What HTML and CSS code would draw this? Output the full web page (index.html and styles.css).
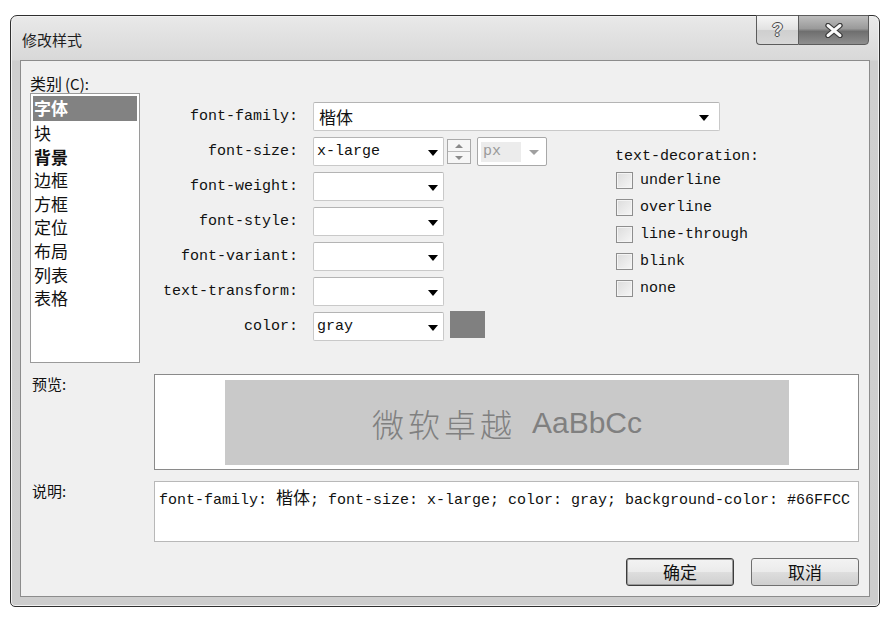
FILE: index.html
```html
<!DOCTYPE html>
<html lang="zh-CN">
<head>
    <meta charset="UTF-8">
    <title>修改样式</title>
    <link rel="stylesheet" href="styles.css">
</head>
<body>
    <div class="window">
        <div class="titlebar">
            <span class="title">修改样式</span>
            <div class="caption-btns">
                <span class="cap-btn help">?</span>
                <span class="cap-btn close">
                    <svg width="20" height="15" viewBox="0 0 20 15">
                        <path d="M4 2.5 L16 12.5 M16 2.5 L4 12.5" stroke="#3a3a3a" stroke-width="5.4" stroke-linecap="round"/>
                        <path d="M4 2.5 L16 12.5 M16 2.5 L4 12.5" stroke="#fafafa" stroke-width="3" stroke-linecap="round"/>
                    </svg>
                </span>
            </div>
        </div>

        <div class="panel">
            <div class="top">
                <div class="category">
                    <div class="cat-label">类别<span class="mnemonic">(C):</span></div>
                    <ul class="listbox">
                        <li class="selected">字体</li>
                        <li>块</li>
                        <li class="strong">背景</li>
                        <li>边框</li>
                        <li>方框</li>
                        <li>定位</li>
                        <li>布局</li>
                        <li>列表</li>
                        <li>表格</li>
                    </ul>
                </div>

                <div class="fields">
                    <label>font-family:</label>
                    <div class="combo wide"><span class="value cjk">楷体</span><span class="arrow"></span></div>

                    <div class="decoration">
                        <div class="deco-title">text-decoration:</div>
                        <div class="check"><span class="box"></span>underline</div>
                        <div class="check"><span class="box"></span>overline</div>
                        <div class="check"><span class="box"></span>line-through</div>
                        <div class="check"><span class="box"></span>blink</div>
                        <div class="check"><span class="box"></span>none</div>
                    </div>

                    <label>font-size:</label>
                    <div class="control-row">
                        <div class="combo"><span class="value">x-large</span><span class="arrow"></span></div>
                        <div class="spinner">
                            <span class="spin up"></span>
                            <span class="spin down"></span>
                        </div>
                        <div class="combo unit disabled"><span class="value">px</span><span class="arrow"></span></div>
                    </div>

                    <label>font-weight:</label>
                    <div class="combo"><span class="value"></span><span class="arrow"></span></div>

                    <label>font-style:</label>
                    <div class="combo"><span class="value"></span><span class="arrow"></span></div>

                    <label>font-variant:</label>
                    <div class="combo"><span class="value"></span><span class="arrow"></span></div>

                    <label>text-transform:</label>
                    <div class="combo"><span class="value"></span><span class="arrow"></span></div>

                    <label>color:</label>
                    <div class="control-row">
                        <div class="combo"><span class="value">gray</span><span class="arrow"></span></div>
                        <span class="swatch"></span>
                    </div>
                </div>
            </div>

            <div class="row preview-row">
                <div class="row-label">预览:</div>
                <div class="preview">
                    <div class="sample"><span class="sample-cjk">微软卓越</span> <span class="sample-latin">AaBbCc</span></div>
                </div>
            </div>

            <div class="row desc-row">
                <div class="row-label">说明:</div>
                <div class="desc">font-family: <span class="cjk">楷体</span>; font-size: x-large; color: gray; background-color: #66FFCC</div>
            </div>

            <div class="actions">
                <button type="button" class="btn default">确定</button>
                <button type="button" class="btn">取消</button>
            </div>
        </div>
    </div>
</body>
</html>
```

FILE: styles.css
```css
body { margin: 0; background: #fff; font-family: "Noto Sans CJK SC", sans-serif; color: #111; }

.window {
    box-sizing: border-box;
    width: 870px;
    height: 592px;
    margin: 15px 0 0 10px;
    padding: 0 9px 9px 9px;
    border: 1px solid #2f2f2f;
    border-radius: 7px 7px 5px 5px;
    background: linear-gradient(#e9e9e9, #d8d8d8 44px, #cfcfcf 45px, #cdcdcd);
    box-shadow: inset 0 0 0 1px #f2f2f2;
}

.titlebar { height: 44px; display: flex; align-items: flex-start; }
.title { font-size: 15px; line-height: 20px; padding: 14px 0 0 2px; color: #1e1e1e; }
.caption-btns { margin: -1px 1px 0 auto; display: flex; }
.cap-btn {
    box-sizing: border-box;
    height: 30px;
    display: flex;
    align-items: center;
    justify-content: center;
    border: 1px solid #5c5c5c;
}
.cap-btn.help {
    width: 42px;
    border-radius: 0 0 0 4px;
    border-right: none;
    background: linear-gradient(#f6f6f6, #e2e2e2 48%, #cfcfcf 52%, #d8d8d8);
    font-family: "Liberation Sans", sans-serif;
    font-weight: bold;
    font-size: 18px;
    color: #ececec;
    text-shadow: -1px 0 #4a4a4a, 1px 0 #4a4a4a, 0 -1px #4a4a4a, 0 1px #4a4a4a;
}
.cap-btn.close {
    width: 71px;
    border-radius: 0 0 4px 0;
    background: linear-gradient(#bdbdbd, #9a9a9a 45%, #6f6f6f 55%, #8e8e8e);
}

.panel {
    box-sizing: border-box;
    height: 537px;
    border: 1px solid #8c8c8c;
    background: #f0f0f0;
    padding: 13px 10px 0 9px;
}

.top { display: flex; height: 289px; }
.category { width: 110px; }
.cat-label { height: 19px; font-size: 16px; line-height: 18px; }
.mnemonic { font-size: 15px; margin-left: 3px; }
.listbox {
    box-sizing: border-box;
    height: 270px;
    margin: 0;
    padding: 2px;
    list-style: none;
    background: #fff;
    border: 1px solid #9a9a9a;
}
.listbox li { height: 23.6px; line-height: 23px; font-size: 17px; padding-left: 1px; }
.listbox li.selected { background: #828282; color: #fff; font-weight: bold; height: 25px; }
.listbox li.strong { font-weight: bold; }

.fields {
    flex: 1;
    margin-top: 28px;
    display: grid;
    grid-template-columns: 173px 303px 1fr;
    grid-auto-rows: 29px;
    row-gap: 6px;
    align-items: center;
    font-family: "Liberation Mono", monospace;
    font-size: 15px;
}
.fields label { text-align: right; padding-right: 15px; white-space: nowrap; }

.combo {
    box-sizing: border-box;
    width: 131px;
    height: 29px;
    display: flex;
    align-items: center;
    background: #fff;
    border: 1px solid #c9c9c9;
    border-top-color: #b4b4b4;
    border-radius: 2px;
    padding: 0 5px 0 3px;
}
.combo .value { flex: 1; white-space: nowrap; }
.combo .arrow {
    width: 0;
    height: 0;
    border-left: 5px solid transparent;
    border-right: 5px solid transparent;
    border-top: 6px solid #000;
    margin-top: 2px;
}
.combo.wide { grid-column: 2 / span 2; width: 407px; padding-right: 10px; }
.cjk { font-family: "Noto Sans CJK SC", sans-serif; font-size: 16px; }
.combo.wide .value { font-size: 17px; padding-left: 2px; }

.control-row { display: flex; align-items: center; gap: 6px; }
.spinner {
    box-sizing: border-box;
    width: 24px;
    height: 25px;
    margin-left: -3px;
    border: 1px solid #a9a9a9;
    display: flex;
    flex-direction: column;
    background: #f6f6f6;
}
.spin { flex: 1; display: flex; align-items: center; justify-content: center; }
.spin.up { border-bottom: 1px solid #b9b9b9; }
.spin.up::after { content: ""; border-left: 4px solid transparent; border-right: 4px solid transparent; border-bottom: 4px solid #8a8a8a; }
.spin.down::after { content: ""; border-left: 4px solid transparent; border-right: 4px solid transparent; border-top: 4px solid #8a8a8a; }
.combo.unit { width: 70px; border-color: #a8a8a8; padding-right: 9px; }
.combo.disabled .value { color: #9a9a9a; }
.combo.unit .value { flex: 0 0 38px; background: #ececec; height: 20px; line-height: 20px; margin-right: 8px; padding-left: 2px; }
.combo.disabled .arrow { border-top-color: #a0a0a0; border-left-width: 5px; border-right-width: 5px; border-top-width: 5px; }
.swatch { width: 35px; height: 27px; background: #808080; margin-top: -4px; }

.decoration { grid-column: 3; grid-row: 2 / span 6; align-self: start; padding-top: 11px; white-space: nowrap; }
.deco-title { line-height: 18px; margin-left: -1px; }
.check { height: 27px; display: flex; align-items: center; }
.deco-title + .check { margin-top: 1px; }
.check .box {
    box-sizing: border-box;
    width: 17px;
    height: 17px;
    margin-right: 7px;
    border: 1px solid #8e8e8e;
    background: linear-gradient(135deg, #dcdcdc, #f6f6f6);
    box-shadow: inset 0 0 0 1px #f4f4f4;
}

.row { display: flex; margin-top: 11px; }
.row-label { width: 124px; font-size: 15px; line-height: 20px; padding-left: 2px; box-sizing: border-box; }
.preview {
    box-sizing: border-box;
    flex: 1;
    height: 96px;
    background: #fff;
    border: 1px solid #8a8a8a;
    padding: 5px 69px 4px 70px;
}
.sample {
    height: 100%;
    background: #c9c9c9;
    color: #808080;
    display: flex;
    align-items: center;
    justify-content: center;
    gap: 16px;
}
.sample-cjk { font-size: 32px; letter-spacing: 4px; font-weight: 300; }
.sample-latin { font-family: "Liberation Sans Narrow", "Liberation Sans", sans-serif; font-size: 30px; }

.desc {
    box-sizing: border-box;
    flex: 1;
    height: 61px;
    background: #fff;
    border: 1px solid #b8b8b8;
    padding: 5px 4px;
    font-family: "Liberation Mono", monospace;
    font-size: 15px;
    line-height: 20px;
    white-space: nowrap;
}
.desc .cjk { font-size: 17px; }

.actions { display: flex; justify-content: flex-end; gap: 17px; margin-top: 16px; }
.btn {
    box-sizing: border-box;
    width: 108px;
    height: 28px;
    border: 1px solid #707070;
    border-radius: 3px;
    background: linear-gradient(#f3f3f3, #ebebeb 48%, #dddddd 52%, #cfcfcf);
    font-family: "Noto Sans CJK SC", sans-serif;
    font-size: 17px;
    line-height: 20px;
    color: #111;
    padding: 0;
}
.btn.default { border-color: #3c3c3c; box-shadow: inset 0 0 0 1px #9a9a9a; }
```
